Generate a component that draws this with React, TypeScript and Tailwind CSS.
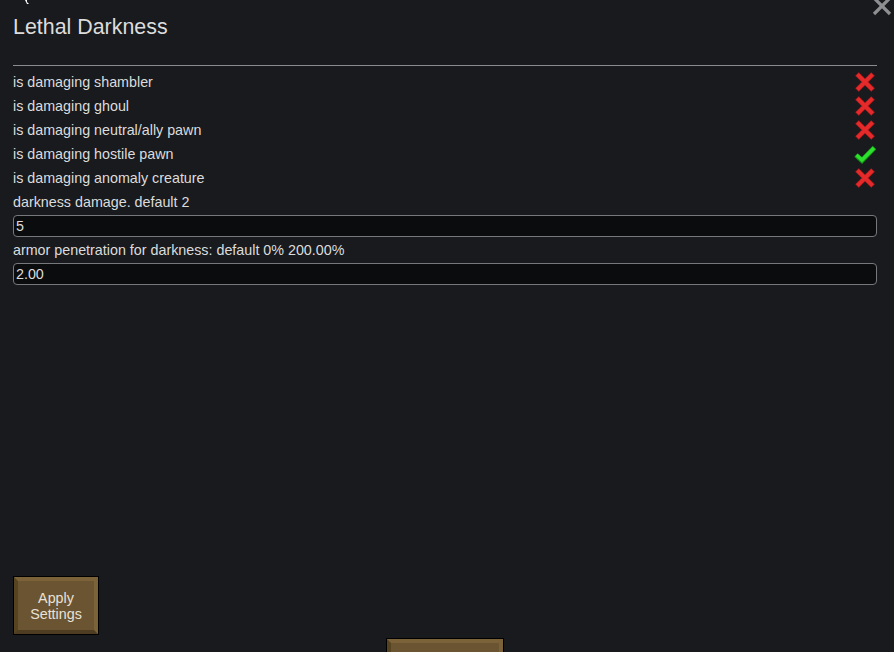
import React from "react";

const RedX = () => (
  <svg width="24" height="24" viewBox="0 0 24 24">
    <path d="M4 4 L20 20 M20 4 L4 20" stroke="#b81c1c" strokeWidth="5" strokeLinecap="butt" fill="none" />
    <path d="M4.5 4.5 L19.5 19.5 M19.5 4.5 L4.5 19.5" stroke="#e42a2a" strokeWidth="3.6" strokeLinecap="butt" fill="none" />
  </svg>
);

const Check = () => (
  <svg width="24" height="24" viewBox="0 0 24 24">
    <path d="M3 13 L9 18.5 L21.5 5.5" stroke="#169a16" strokeWidth="5" strokeLinejoin="miter" fill="none" />
    <path d="M3.5 13 L9 18 L21 6" stroke="#2ee02e" strokeWidth="3.4" strokeLinejoin="miter" fill="none" />
  </svg>
);

const rows: { label: string; on: boolean }[] = [
  { label: "is damaging shambler", on: false },
  { label: "is damaging ghoul", on: false },
  { label: "is damaging neutral/ally pawn", on: false },
  { label: "is damaging hostile pawn", on: true },
  { label: "is damaging anomaly creature", on: false },
];

export default function App() {
  return (
    <div
      className="relative h-[652px] w-[894px] overflow-hidden bg-[#181a1e] text-[#dcdcdc]"
      style={{ fontFamily: '"Liberation Sans", Arial, sans-serif' }}
    >
      {/* cursor fragment */}
      <svg className="absolute left-[24px] top-0" width="8" height="6" viewBox="0 0 8 6">
        <path d="M1 0 L3 0 L3 2 L5 4 L3 4 Z" fill="#ffffff" />
      </svg>
      {/* close X */}
      <svg className="absolute right-[2px] top-[-3px]" width="20" height="19" viewBox="0 0 20 19">
        <path d="M2 1 L18 17 M18 1 L2 17" stroke="#8e8f91" strokeWidth="3.2" fill="none" />
      </svg>

      <div className="flex h-full flex-col pl-[13px] pr-[17px] pt-[12px]">
        <div className="h-[30px] text-[21.4px] leading-[30px]">Lethal Darkness</div>
        <div className="mt-[23px] h-px bg-[#8a8b8d]" />
        <div className="mt-[3px] flex flex-col">
          {rows.map((r) => (
            <div key={r.label} className="flex h-[24px] items-center justify-between text-[14.3px]">
              <span className="pt-[3px]">{r.label}</span>
              <span className="flex w-[24px] items-center justify-center pt-[2px]">{r.on ? <Check /> : <RedX />}</span>
            </div>
          ))}
          <div className="flex h-[24px] items-center pt-[3px] text-[14.3px]">darkness damage. default 2</div>
          <div className="mt-[2px] flex h-[22px] items-center rounded-[4px] border border-[#77787b] bg-[#0b0c0e] px-[2px] pt-[1px] text-[14.3px]">
            5
          </div>
          <div className="flex h-[24px] items-center pt-[3px] text-[14.3px]">armor penetration for darkness: default 0% 200.00%</div>
          <div className="mt-[2px] flex h-[22px] items-center rounded-[4px] border border-[#77787b] bg-[#0b0c0e] px-[2px] pt-[1px] text-[14.3px]">
            2.00
          </div>
        </div>

        <div className="flex-1" />

        <div className="h-[59px] w-[86px] shrink-0 border border-black">
          <div className="flex h-full w-full items-center justify-center border-[4px] border-t-[#7b6238] border-r-[#7b6238] border-b-[#4e3d20] border-l-[#56431f] bg-[#6b5432] text-center text-[14.3px] leading-[16px] text-[#e8e2d8]">
            Apply
            <br />
            Settings
          </div>
        </div>
        <div className="mb-[-26px] ml-[373px] mt-[3px] h-[40px] w-[118px] shrink-0 border border-black">
          <div className="h-full w-full border-[4px] border-t-[#7b6238] border-r-[#7b6238] border-b-[#4e3d20] border-l-[#56431f] bg-[#6b5432]" />
        </div>
      </div>
    </div>
  );
}
